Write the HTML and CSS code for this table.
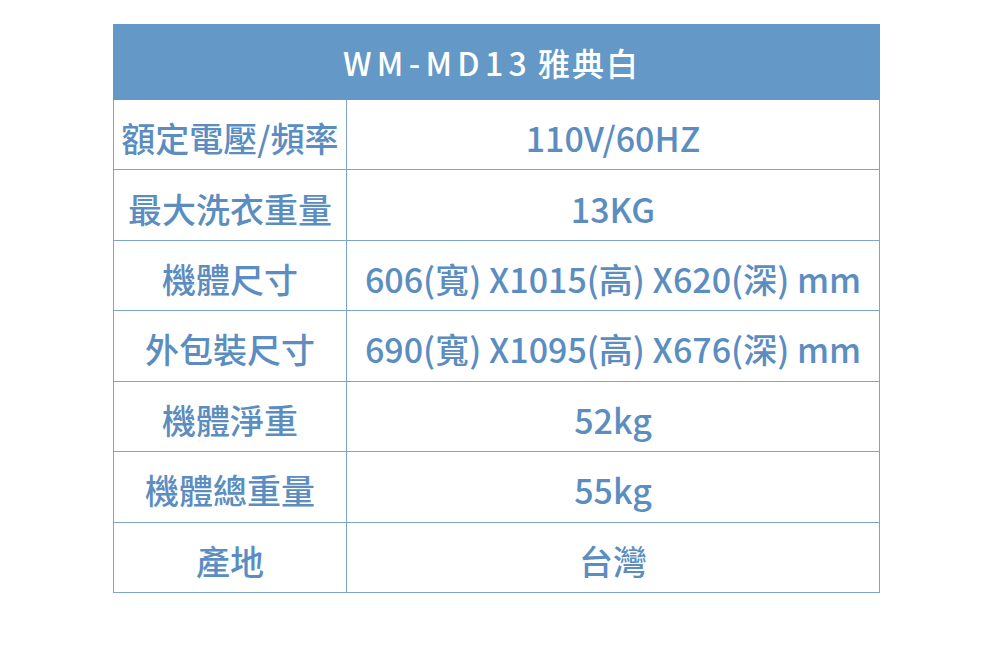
FILE: index.html
```
<!DOCTYPE html>
<html lang="zh-Hant">
<head>
<meta charset="utf-8">
<link rel="stylesheet" href="styles.css">
</head>
<body>
<div class="spec">
  <div class="spec-head"><span class="model">WM-MD13</span><span class="color-name">雅典白</span></div>
  <div class="spec-row"><div class="k">額定電壓/頻率</div><div class="v">110V/60HZ</div></div>
  <div class="spec-row"><div class="k">最大洗衣重量</div><div class="v">13KG</div></div>
  <div class="spec-row"><div class="k">機體尺寸</div><div class="v">606(寬) X1015(高) X620(深) mm</div></div>
  <div class="spec-row"><div class="k">外包裝尺寸</div><div class="v">690(寬) X1095(高) X676(深) mm</div></div>
  <div class="spec-row"><div class="k">機體淨重</div><div class="v">52kg</div></div>
  <div class="spec-row"><div class="k">機體總重量</div><div class="v">55kg</div></div>
  <div class="spec-row"><div class="k">產地</div><div class="v">台灣</div></div>
</div>
</body>
</html>
```
FILE: styles.css
```
html, body {
  margin: 0;
  padding: 0;
  background: #ffffff;
}
body {
  padding-top: 24px;
  font-family: "Noto Sans CJK TC", "Noto Sans", sans-serif;
}
.spec {
  margin-left: 113px;
  width: 767px;
  box-sizing: border-box;
}
.spec-head {
  height: 76px;
  background: #6398c7;
  color: #ffffff;
  font-size: 32px;
  font-weight: 500;
  display: flex;
  align-items: center;
  justify-content: center;
  padding-right: 12px;
}
.model {
  letter-spacing: 5.3px;
  margin-right: -5px;
}
.color-name {
  letter-spacing: 2px;
  margin-left: 11px;
  margin-right: -2px;
}
.spec-row {
  display: grid;
  grid-template-columns: 233px 1fr;
  height: 70.43px;
  box-sizing: border-box;
  border-left: 1px solid #7fa4cc;
  border-right: 1px solid #7fa4cc;
  border-bottom: 1px solid #7fa4cc;
  color: #5b8dc1;
  font-size: 34px;
  font-weight: 500;
}
.k, .v {
  display: flex;
  align-items: center;
  justify-content: center;
  padding-top: 6px;
  white-space: nowrap;
}
.k {
  border-right: 1px solid #7fa4cc;
}
```
